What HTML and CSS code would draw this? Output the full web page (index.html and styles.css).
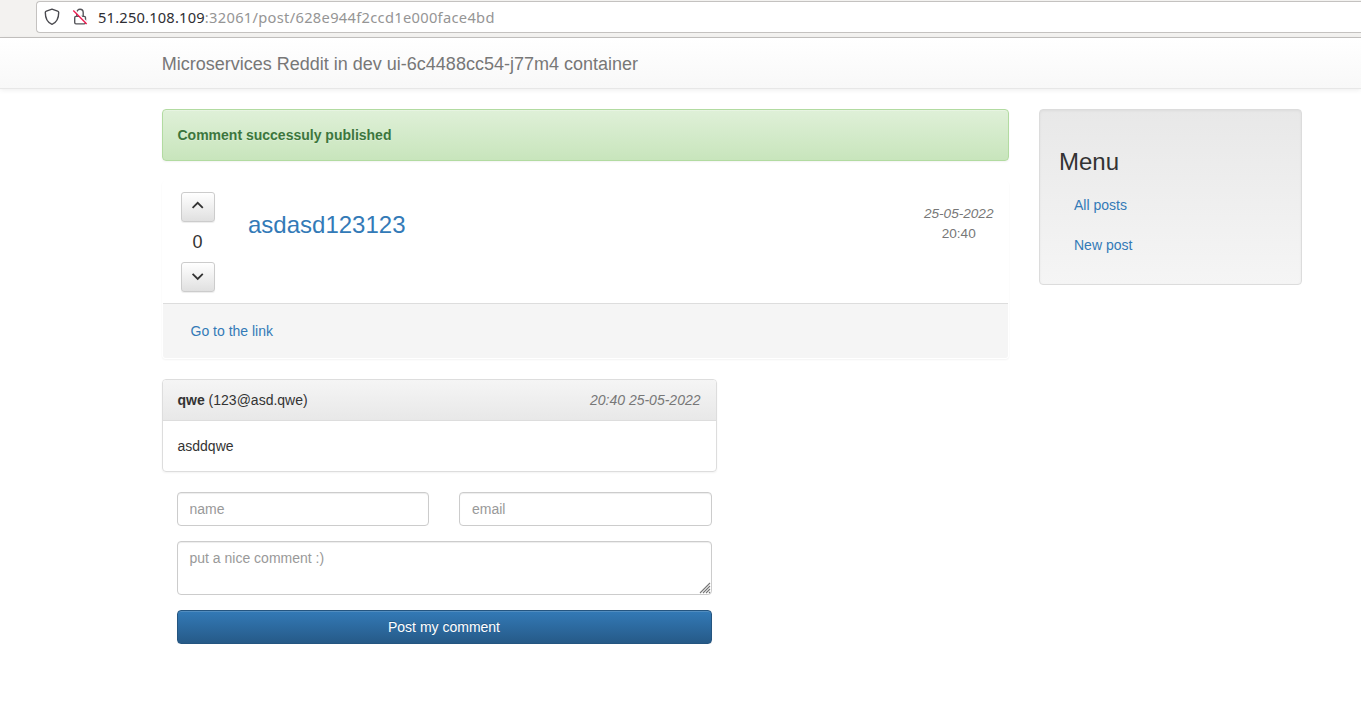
FILE: index.html
```html
<!DOCTYPE html>
<html lang="en">
<head>
<meta charset="utf-8">
<title>Microservices Reddit</title>
<link rel="stylesheet" href="styles.css">
</head>
<body>
<div class="toolbar">
  <div class="urlbar">
    <svg class="shield" width="16" height="18" viewBox="0 0 16 18"><path d="M8 1.2 L13.6 3.1 Q14.7 3.5 14.7 4.6 C14.7 10.6 12.6 14.6 8 16.4 C3.4 14.6 1.3 10.6 1.3 4.6 Q1.3 3.5 2.4 3.1 Z" fill="none" stroke="#4a4a4f" stroke-width="1.4" stroke-linejoin="round"/></svg>
    <svg class="lock" width="16" height="18" viewBox="0 0 16 18"><rect x="2.7" y="8.4" width="10.8" height="7.5" rx="1.3" fill="none" stroke="#55555a" stroke-width="1.4"/><path d="M4.8 8.2V4.5a3.2 3.2 0 0 1 6.4 0v3.7" fill="none" stroke="#55555a" stroke-width="1.4"/><path d="M2.3 1.8 15.3 14.9" stroke="#fff" stroke-width="1.6"/><path d="M1.3 2.5 14.7 16" stroke="#f0194f" stroke-width="1.3"/></svg>
    <span class="url"><span class="host">51.250.108.109</span>:32061/post/628e944f2ccd1e000face4bd</span>
  </div>
</div>
<nav class="navbar"><span class="brand">Microservices Reddit in dev ui-6c4488cc54-j77m4 container</span></nav>
<div class="container">
  <main class="main">
    <div class="alert">Comment successuly published</div>
    <article class="post">
      <div class="post-body">
        <div class="votes">
          <button class="vote"><svg width="14" height="14" viewBox="0 0 14 14"><path d="M1.6 8.9 6.7 3.8 11.8 8.9"/></svg></button>
          <span class="score">0</span>
          <button class="vote"><svg width="14" height="14" viewBox="0 0 14 14"><path d="M1.6 4.9 6.7 10 11.8 4.9"/></svg></button>
        </div>
        <h3 class="title"><a href="#">asdasd123123</a></h3>
        <div class="stamp"><em>25-05-2022</em><span>20:40</span></div>
      </div>
      <div class="post-footer"><a href="#">Go to the link</a></div>
    </article>
    <section class="comment">
      <header class="comment-head"><span><b>qwe</b> (123@asd.qwe)</span><em>20:40 25-05-2022</em></header>
      <div class="comment-body">asddqwe</div>
    </section>
    <form class="reply">
      <div class="fields">
        <input class="control" type="text" placeholder="name">
        <input class="control" type="text" placeholder="email">
      </div>
      <div class="area">
        <textarea class="control" placeholder="put a nice comment :)"></textarea>
        <svg class="grip" width="12" height="12" viewBox="0 0 12 12"><path d="M1 11 11 1M4 11 11 4M7 11 11 7M10 11 11 10"/></svg>
      </div>
      <button class="submit" type="button">Post my comment</button>
    </form>
  </main>
  <aside class="menu">
    <h3>Menu</h3>
    <a href="#">All posts</a>
    <a href="#">New post</a>
  </aside>
</div>
</body>
</html>
```

FILE: styles.css
```css
* { box-sizing: border-box; }
body {
  margin: 0;
  background: #fff;
  color: #333;
  font: 14px/20px "Liberation Sans", Arial, sans-serif;
  overflow: hidden;
}
a { color: #337ab7; text-decoration: none; }
input, textarea, button { font: inherit; margin: 0; }
.toolbar {
  height: 38px;
  padding: 1px 0 4px 36px;
  background: #f3f2f0;
  border-bottom: 1px solid #c4c2c0;
}
.urlbar {
  display: flex;
  align-items: center;
  height: 32px;
  padding-left: 7px;
  background: #fff;
  border: 1px solid #c4c2c0;
  border-right: 0;
  border-radius: 4px 0 0 4px;
}
.lock { margin-left: 12px; }
.url {
  margin-left: 10px;
  color: #959595;
  font-family: "Noto Sans", sans-serif;
  font-size: 14.67px;
  letter-spacing: .31px;
  white-space: nowrap;
}
.host { color: #2e2e33; letter-spacing: .2px; }
.navbar {
  height: 51px;
  margin-bottom: 20px;
  padding: 16px 0 0 161.75px;
  border-bottom: 1px solid #e7e7e7;
  background: linear-gradient(#fff, #f8f8f8);
  box-shadow: inset 0 1px 0 rgba(255,255,255,.15), 0 1px 5px rgba(0,0,0,.075);
}
.brand {
  display: block;
  color: #777;
  font-size: 18px;
  line-height: 21px;
  text-shadow: 0 1px 0 rgba(255,255,255,.25);
}
.container {
  display: grid;
  grid-template-columns: 847.5px 262.5px;
  gap: 30px;
  align-items: start;
  margin-left: 161.5px;
}
.alert {
  height: 52px;
  margin-bottom: 20px;
  padding: 15px;
  border: 1px solid #b2dba1;
  border-radius: 4px;
  background: linear-gradient(#dff0d8, #c8e5bc);
  box-shadow: inset 0 1px 0 rgba(255,255,255,.25), 0 1px 2px rgba(0,0,0,.05);
  color: #3c763d;
  font-weight: bold;
  text-shadow: 0 1px 0 rgba(255,255,255,.2);
}
.post {
  height: 178px;
  margin-bottom: 20px;
  border: 1px solid transparent;
  border-radius: 4px;
  box-shadow: 0 1px 2px rgba(0,0,0,.05);
}
.post-body {
  display: flex;
  align-items: flex-start;
  height: 121px;
  padding: 10px 14.5px 0 18px;
}
.votes {
  display: flex;
  flex-direction: column;
  align-items: center;
  width: 34px;
}
.vote {
  display: flex;
  align-items: center;
  justify-content: center;
  width: 34px;
  height: 30px;
  padding: 0 0 2px;
  border: 1px solid #ccc;
  border-radius: 3px;
  background: linear-gradient(#fff, #e0e0e0);
  box-shadow: inset 0 1px 0 rgba(255,255,255,.15), 0 1px 1px rgba(0,0,0,.075);
}
.vote path { fill: none; stroke: #333; stroke-width: 1.8; }
.score { margin: 10px 0; font-size: 18px; line-height: 20px; }
.title {
  margin: 20px 0 0 33.5px;
  font-size: 24px;
  font-weight: 500;
  line-height: 26px;
}
.stamp {
  display: flex;
  flex-direction: column;
  align-items: center;
  margin: 12px 0 0 auto;
  color: #777;
  font-size: 13.6px;
}
.post-footer {
  height: 55px;
  padding: 17px 28px;
  border-top: 1px solid #ddd;
  border-radius: 0 0 3px 3px;
  background: #f5f5f5;
}
.comment {
  width: 555px;
  margin-bottom: 20px;
  border: 1px solid #ddd;
  border-radius: 4px;
  box-shadow: 0 1px 2px rgba(0,0,0,.05);
}
.comment-head {
  display: flex;
  justify-content: space-between;
  padding: 10px 15px;
  border-bottom: 1px solid #ddd;
  border-radius: 3px 3px 0 0;
  background: linear-gradient(#f5f5f5, #e8e8e8);
}
.comment-head em { color: #777; }
.comment-body { padding: 15px; }
.reply {
  display: grid;
  gap: 15px;
  width: 565px;
  padding: 0 15px;
}
.fields { display: grid; grid-template-columns: 1fr 1fr; gap: 30px; }
.control {
  display: block;
  width: 100%;
  height: 34px;
  padding: 6px 12px;
  border: 1px solid #ccc;
  border-radius: 4px;
  background: #fff;
  box-shadow: inset 0 1px 1px rgba(0,0,0,.075);
}
.control::placeholder { color: #999; }
.area { position: relative; }
.area .control { height: 54px; resize: none; overflow: hidden; }
.grip { position: absolute; right: 1px; bottom: 1px; }
.grip path { fill: none; stroke: #777; stroke-width: 1.1; }
.submit {
  height: 34px;
  padding: 6px 12px;
  border: 1px solid #245580;
  border-radius: 4px;
  background: linear-gradient(#337ab7, #265a88);
  box-shadow: inset 0 1px 0 rgba(255,255,255,.15), 0 1px 1px rgba(0,0,0,.075);
  color: #fff;
  text-shadow: 0 -1px 0 rgba(0,0,0,.2);
}
.menu {
  height: 176px;
  padding: 39px 19px 0;
  border: 1px solid #dcdcdc;
  border-radius: 4px;
  background: linear-gradient(#e8e8e8, #f5f5f5);
  box-shadow: inset 0 1px 3px rgba(0,0,0,.05), 0 1px 0 rgba(255,255,255,.1);
}
.menu h3 {
  margin: 0 0 10px;
  font-size: 24px;
  font-weight: 500;
  line-height: 26px;
}
.menu a { display: block; padding: 10px 15px; }
```
